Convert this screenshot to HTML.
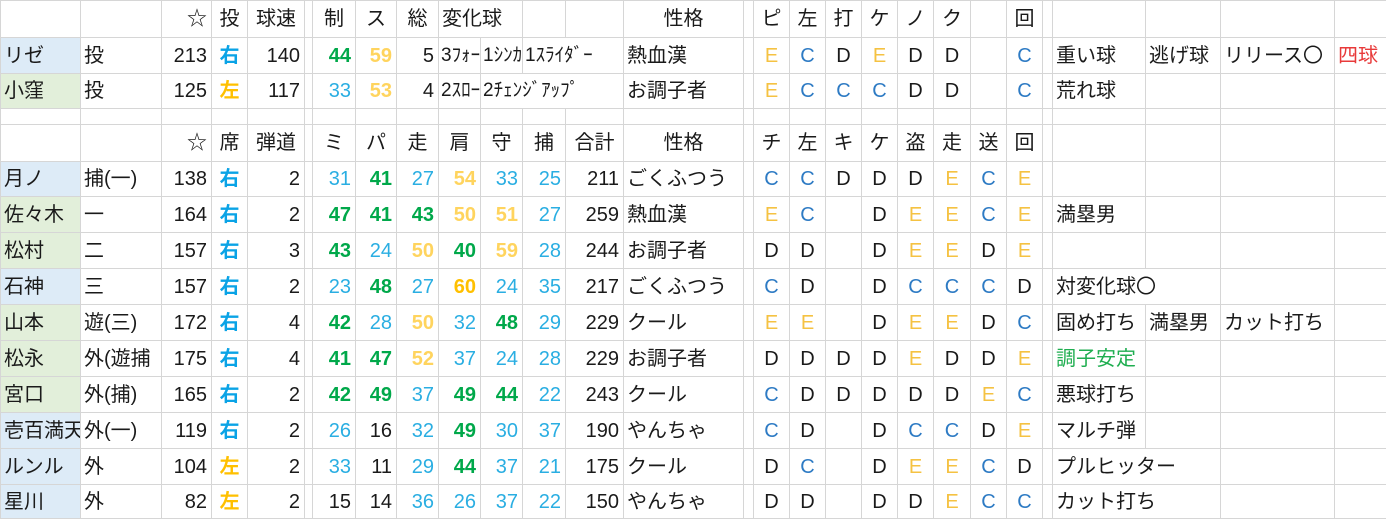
<!DOCTYPE html>
<html><head><meta charset="utf-8"><style>
body{margin:0;background:#fff;width:1386px;height:518px;overflow:hidden}
table{border-collapse:collapse;table-layout:fixed;width:1386px;font-family:"Liberation Sans","Noto Sans CJK JP",sans-serif;font-size:20px;color:#1a1a1a}
td{border:1px solid #d6d6d6;padding:0 3px;white-space:nowrap;overflow:hidden;line-height:20px}
td.r{text-align:right;padding-right:4px}
td.c{text-align:center;padding:0}
.g{color:#00a84a;font-weight:bold}
.y{color:#ffd45e;font-weight:bold}
.Y{color:#ffc000;font-weight:bold}
.b{color:#2aaee2}
.R{color:#0aa3e6;font-weight:bold;text-align:center;padding:0}
.Lf{color:#ffc000;font-weight:bold;text-align:center;padding:0}
.C{color:#2e7bc4;text-align:center;padding:0}
.E{color:#f5c242;text-align:center;padding:0}
.D{text-align:center;padding:0}
.nb{background:#ddebf7}
.ng{background:#e2efda}
.hw{font-size:19px;padding-left:2px}
</style></head><body>
<table>
<colgroup><col style="width:80px"><col style="width:81px"><col style="width:50px"><col style="width:36px"><col style="width:57px"><col style="width:8px"><col style="width:43px"><col style="width:41px"><col style="width:42px"><col style="width:42px"><col style="width:42px"><col style="width:43px"><col style="width:58px"><col style="width:120px"><col style="width:10px"><col style="width:36px"><col style="width:36px"><col style="width:36px"><col style="width:36px"><col style="width:36px"><col style="width:37px"><col style="width:36px"><col style="width:36px"><col style="width:10px"><col style="width:93px"><col style="width:75px"><col style="width:114px"><col style="width:52px"></colgroup>
<tr style="height:37px"><td></td><td></td><td class="r">☆</td><td class="c">投</td><td class="c">球速</td><td></td><td class="c">制</td><td class="c">ス</td><td class="c">総</td><td colspan="2">変化球</td><td></td><td></td><td class="c">性格</td><td></td><td class="D">ピ</td><td class="D">左</td><td class="D">打</td><td class="D">ケ</td><td class="D">ノ</td><td class="D">ク</td><td></td><td class="D">回</td><td></td><td></td><td></td><td></td><td></td></tr>
<tr style="height:36px"><td class="nb">リゼ</td><td>投</td><td class="r">213</td><td class="R">右</td><td class="r">140</td><td></td><td class="r g">44</td><td class="r y">59</td><td class="r">5</td><td class="hw">3ﾌｫｰｸ</td><td class="hw">1ｼﾝｶｰ</td><td class="hw" colspan="2">1ｽﾗｲﾀﾞｰ</td><td>熱血漢</td><td></td><td class="E">E</td><td class="C">C</td><td class="D">D</td><td class="E">E</td><td class="D">D</td><td class="D">D</td><td></td><td class="C">C</td><td></td><td>重い球</td><td>逃げ球</td><td>リリース〇</td><td style="color:#e83a3a">四球</td></tr>
<tr style="height:35px"><td class="ng">小窪</td><td>投</td><td class="r">125</td><td class="Lf">左</td><td class="r">117</td><td></td><td class="r b">33</td><td class="r y">53</td><td class="r">4</td><td class="hw">2ｽﾛｰｶｰﾌﾞ</td><td class="hw" colspan="3">2ﾁｪﾝｼﾞｱｯﾌﾟ</td><td>お調子者</td><td></td><td class="E">E</td><td class="C">C</td><td class="C">C</td><td class="C">C</td><td class="D">D</td><td class="D">D</td><td></td><td class="C">C</td><td></td><td>荒れ球</td><td></td><td></td><td></td></tr>
<tr style="height:16px"><td></td><td></td><td></td><td></td><td></td><td></td><td></td><td></td><td></td><td></td><td></td><td></td><td></td><td></td><td></td><td></td><td></td><td></td><td></td><td></td><td></td><td></td><td></td><td></td><td></td><td></td><td></td><td></td></tr>
<tr style="height:37px"><td></td><td></td><td class="r">☆</td><td class="c">席</td><td class="c">弾道</td><td></td><td class="c">ミ</td><td class="c">パ</td><td class="c">走</td><td class="c">肩</td><td class="c">守</td><td class="c">捕</td><td class="c">合計</td><td class="c">性格</td><td></td><td class="D">チ</td><td class="D">左</td><td class="D">キ</td><td class="D">ケ</td><td class="D">盗</td><td class="D">走</td><td class="D">送</td><td class="D">回</td><td></td><td></td><td></td><td></td><td></td></tr>
<tr style="height:35px"><td class="nb">月ノ</td><td>捕(一)</td><td class="r">138</td><td class="R">右</td><td class="r">2</td><td></td><td class="r b">31</td><td class="r g">41</td><td class="r b">27</td><td class="r y">54</td><td class="r b">33</td><td class="r b">25</td><td class="r">211</td><td>ごくふつう</td><td></td><td class="C">C</td><td class="C">C</td><td class="D">D</td><td class="D">D</td><td class="D">D</td><td class="E">E</td><td class="C">C</td><td class="E">E</td><td></td><td></td><td></td><td></td><td></td></tr>
<tr style="height:36px"><td class="ng">佐々木</td><td>一</td><td class="r">164</td><td class="R">右</td><td class="r">2</td><td></td><td class="r g">47</td><td class="r g">41</td><td class="r g">43</td><td class="r y">50</td><td class="r y">51</td><td class="r b">27</td><td class="r">259</td><td>熱血漢</td><td></td><td class="E">E</td><td class="C">C</td><td></td><td class="D">D</td><td class="E">E</td><td class="E">E</td><td class="C">C</td><td class="E">E</td><td></td><td>満塁男</td><td></td><td></td><td></td></tr>
<tr style="height:36px"><td class="ng">松村</td><td>二</td><td class="r">157</td><td class="R">右</td><td class="r">3</td><td></td><td class="r g">43</td><td class="r b">24</td><td class="r y">50</td><td class="r g">40</td><td class="r y">59</td><td class="r b">28</td><td class="r">244</td><td>お調子者</td><td></td><td class="D">D</td><td class="D">D</td><td></td><td class="D">D</td><td class="E">E</td><td class="E">E</td><td class="D">D</td><td class="E">E</td><td></td><td></td><td></td><td></td><td></td></tr>
<tr style="height:36px"><td class="nb">石神</td><td>三</td><td class="r">157</td><td class="R">右</td><td class="r">2</td><td></td><td class="r b">23</td><td class="r g">48</td><td class="r b">27</td><td class="r Y">60</td><td class="r b">24</td><td class="r b">35</td><td class="r">217</td><td>ごくふつう</td><td></td><td class="C">C</td><td class="D">D</td><td></td><td class="D">D</td><td class="C">C</td><td class="C">C</td><td class="C">C</td><td class="D">D</td><td></td><td colspan="2">対変化球〇</td><td></td><td></td></tr>
<tr style="height:36px"><td class="ng">山本</td><td>遊(三)</td><td class="r">172</td><td class="R">右</td><td class="r">4</td><td></td><td class="r g">42</td><td class="r b">28</td><td class="r y">50</td><td class="r b">32</td><td class="r g">48</td><td class="r b">29</td><td class="r">229</td><td>クール</td><td></td><td class="E">E</td><td class="E">E</td><td></td><td class="D">D</td><td class="E">E</td><td class="E">E</td><td class="D">D</td><td class="C">C</td><td></td><td>固め打ち</td><td>満塁男</td><td>カット打ち</td><td></td></tr>
<tr style="height:36px"><td class="ng">松永</td><td>外(遊捕</td><td class="r">175</td><td class="R">右</td><td class="r">4</td><td></td><td class="r g">41</td><td class="r g">47</td><td class="r y">52</td><td class="r b">37</td><td class="r b">24</td><td class="r b">28</td><td class="r">229</td><td>お調子者</td><td></td><td class="D">D</td><td class="D">D</td><td class="D">D</td><td class="D">D</td><td class="E">E</td><td class="D">D</td><td class="D">D</td><td class="E">E</td><td></td><td style="color:#1fae50">調子安定</td><td></td><td></td><td></td></tr>
<tr style="height:36px"><td class="ng">宮口</td><td>外(捕)</td><td class="r">165</td><td class="R">右</td><td class="r">2</td><td></td><td class="r g">42</td><td class="r g">49</td><td class="r b">37</td><td class="r g">49</td><td class="r g">44</td><td class="r b">22</td><td class="r">243</td><td>クール</td><td></td><td class="C">C</td><td class="D">D</td><td class="D">D</td><td class="D">D</td><td class="D">D</td><td class="D">D</td><td class="E">E</td><td class="C">C</td><td></td><td>悪球打ち</td><td></td><td></td><td></td></tr>
<tr style="height:36px"><td class="nb">壱百満天原サロメ</td><td>外(一)</td><td class="r">119</td><td class="R">右</td><td class="r">2</td><td></td><td class="r b">26</td><td class="r">16</td><td class="r b">32</td><td class="r g">49</td><td class="r b">30</td><td class="r b">37</td><td class="r">190</td><td>やんちゃ</td><td></td><td class="C">C</td><td class="D">D</td><td></td><td class="D">D</td><td class="C">C</td><td class="C">C</td><td class="D">D</td><td class="E">E</td><td></td><td>マルチ弾</td><td></td><td></td><td></td></tr>
<tr style="height:36px"><td class="nb">ルンル</td><td>外</td><td class="r">104</td><td class="Lf">左</td><td class="r">2</td><td></td><td class="r b">33</td><td class="r">11</td><td class="r b">29</td><td class="r g">44</td><td class="r b">37</td><td class="r b">21</td><td class="r">175</td><td>クール</td><td></td><td class="D">D</td><td class="C">C</td><td></td><td class="D">D</td><td class="E">E</td><td class="E">E</td><td class="C">C</td><td class="D">D</td><td></td><td colspan="2">プルヒッター</td><td></td><td></td></tr>
<tr style="height:34px"><td class="nb">星川</td><td>外</td><td class="r">82</td><td class="Lf">左</td><td class="r">2</td><td></td><td class="r">15</td><td class="r">14</td><td class="r b">36</td><td class="r b">26</td><td class="r b">37</td><td class="r b">22</td><td class="r">150</td><td>やんちゃ</td><td></td><td class="D">D</td><td class="D">D</td><td></td><td class="D">D</td><td class="D">D</td><td class="E">E</td><td class="C">C</td><td class="C">C</td><td></td><td colspan="2">カット打ち</td><td></td><td></td></tr>
</table>
</body></html>
